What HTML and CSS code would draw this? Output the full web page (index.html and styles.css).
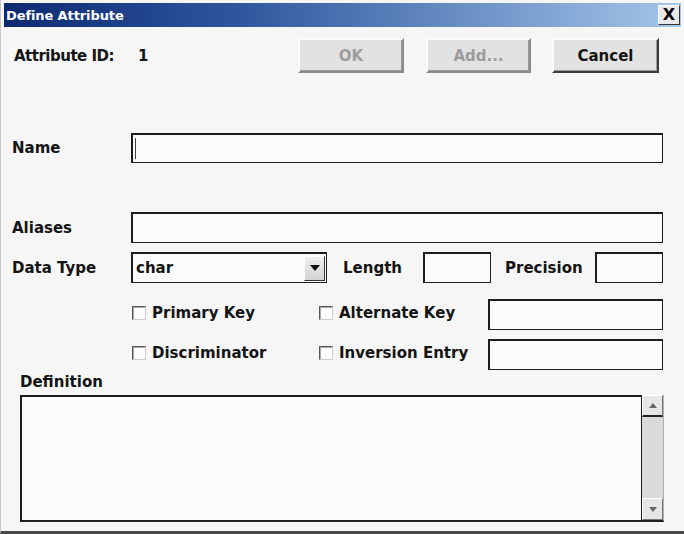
FILE: index.html
```html
<!DOCTYPE html>
<html>
<head>
<meta charset="utf-8">
<title>Define Attribute</title>
<link rel="stylesheet" href="styles.css">
</head>
<body>
<div class="dialog">
  <div class="titlebar">
    <span class="title">Define Attribute</span>
    <span class="close">X</span>
  </div>

  <div class="row-top">
    <span class="lbl id-lbl">Attribute ID:</span>
    <span class="lbl id-val">1</span>
    <button class="btn btn-ok" disabled>OK</button>
    <button class="btn btn-add" disabled>Add...</button>
    <button class="btn btn-cancel">Cancel</button>
  </div>

  <div class="row row-name">
    <span class="lbl col-lbl">Name</span>
    <div class="field field-wide"><span class="caret"></span></div>
  </div>

  <div class="row row-alias">
    <span class="lbl col-lbl">Aliases</span>
    <div class="field field-wide"></div>
  </div>

  <div class="row row-type">
    <span class="lbl col-lbl">Data Type</span>
    <div class="field select">
      <span class="select-val">char</span>
      <span class="drop"><svg width="10" height="6" viewBox="0 0 10 6"><path d="M0 0H10L5 6Z" fill="#111"/></svg></span>
    </div>
    <span class="lbl len-lbl">Length</span>
    <div class="field small"></div>
    <span class="lbl prec-lbl">Precision</span>
    <div class="field small"></div>
  </div>

  <div class="row row-check1">
    <span class="chk-group g1"><span class="chk"></span><span class="lbl">Primary Key</span></span>
    <span class="chk-group g2"><span class="chk"></span><span class="lbl">Alternate Key</span></span>
    <div class="field medium"></div>
  </div>

  <div class="row row-check2">
    <span class="chk-group g1"><span class="chk"></span><span class="lbl">Discriminator</span></span>
    <span class="chk-group g2"><span class="chk"></span><span class="lbl">Inversion Entry</span></span>
    <div class="field medium"></div>
  </div>

  <div class="def-lbl lbl">Definition</div>
  <div class="def-box">
    <div class="def-text"></div>
    <div class="scroll">
      <span class="sb-btn sb-up"><svg width="8" height="5" viewBox="0 0 8 5"><path d="M0 5H8L4 0Z" fill="#666"/></svg></span>
      <span class="sb-track"></span>
      <span class="sb-btn sb-down"><svg width="8" height="5" viewBox="0 0 8 5"><path d="M0 0H8L4 5Z" fill="#666"/></svg></span>
    </div>
  </div>
</div>
</body>
</html>
```

FILE: styles.css
```css
html, body {
  margin: 0;
  padding: 0;
  background: #f6f6f6;
}
.dialog {
  width: 684px;
  height: 534px;
  box-sizing: border-box;
  padding: 3px 3px 0 3px;
  border-left: 1px solid #c9c9c9;
  border-bottom: 3px solid #4a4a4a;
  background: #f6f6f6;
  font-family: "DejaVu Sans", Verdana, sans-serif;
  font-weight: bold;
  color: #141414;
}
.titlebar {
  height: 24px;
  background: linear-gradient(to right, #0c2a72 0%, #2f579e 35%, #a4c6ea 100%);
  display: flex;
  align-items: center;
  justify-content: space-between;
  padding: 0 1px 0 2px;
}
.title {
  color: #fff;
  font-size: 13px;
  letter-spacing: -0.1px;
}
.close {
  width: 22px;
  height: 20px;
  box-sizing: border-box;
  background: #e8e8e8;
  border: 1px solid;
  border-color: #fff #333 #333 #fff;
  font-size: 16px;
  color: #000;
  display: flex;
  align-items: center;
  justify-content: center;
  line-height: 1;
}
.lbl {
  font-size: 15px;
  white-space: nowrap;
}
.row-top {
  display: flex;
  align-items: center;
  margin-top: 11px;
  height: 35px;
  padding-left: 10px;
}
.id-lbl { width: 124px; letter-spacing: -0.5px; }
.id-val { width: 160px; }
.btn {
  height: 35px;
  box-sizing: border-box;
  background: #e2e2e2;
  border: 2px solid;
  border-color: #fbfbfb #3c3c3c #3c3c3c #fbfbfb;
  box-shadow: inset -1px -1px 0 #9a9a9a;
  font-family: "DejaVu Sans", Verdana, sans-serif;
  font-weight: bold;
  font-size: 15px;
  color: #141414;
  padding: 0;
}
.btn:disabled { color: #9c9c9c; border-color: #fbfbfb #8a8a8a #8a8a8a #fbfbfb; }
.btn-ok { width: 106px; }
.btn-add { width: 105px; margin-left: 22px; }
.btn-cancel { width: 107px; margin-left: 21px; }

.row {
  display: flex;
  align-items: center;
  padding-left: 8px;
}
.col-lbl { width: 119px; }
.field {
  box-sizing: border-box;
  background: #fbfbfb;
  border: 1px solid #1e1e1e;
  border-top-width: 2px;
  border-left-width: 2px;
  height: 31px;
  position: relative;
}
.field-wide { width: 532px; }
.row-name { margin-top: 60px; }
.row-name .field { height: 30px; }
.caret {
  position: absolute;
  left: 2px;
  top: 3px;
  width: 1px;
  height: 21px;
  background: #444;
}
.row-alias { margin-top: 49px; }
.row-type { margin-top: 9px; }
.select {
  width: 196px;
  display: flex;
  align-items: center;
  justify-content: space-between;
  padding-left: 3px;
}
.select-val { font-size: 15px; }
.drop {
  width: 21px;
  height: 25px;
  box-sizing: border-box;
  background: linear-gradient(#f0f0f0, #d2d2d2);
  border: 1px solid;
  border-color: #fff #333 #333 #fff;
  display: flex;
  align-items: center;
  justify-content: center;
  margin-right: 1px;
}
.len-lbl { margin-left: 16px; width: 80px; }
.prec-lbl { margin-left: 14px; width: 90px; }
.small { width: 68px; }
.medium { width: 175px; }
.row-check1 { margin-top: 16px; padding-left: 128px; }
.row-check2 { margin-top: 9px; padding-left: 128px; }
.chk-group {
  display: flex;
  align-items: center;
  gap: 6px;
  margin-bottom: 4px;
}
.g1 { width: 187px; }
.g2 { width: 169px; }
.chk {
  width: 14px;
  height: 14px;
  box-sizing: border-box;
  border: 1px solid;
  border-color: #555 #ccc #ccc #555;
  background: #fdfdfd;
  box-shadow: inset 1px 1px 0 #aaa;
}
.def-lbl {
  margin-top: 3px;
  padding-left: 16px;
  height: 19px;
  line-height: 19px;
}
.def-box {
  margin: 3px 0 0 16px;
  width: 644px;
  height: 127px;
  display: flex;
  box-sizing: border-box;
}
.def-text {
  flex: 1;
  background: #fbfbfb;
  border: 2px solid #1e1e1e;
  border-right-width: 1px;
  border-bottom-width: 2px;
}
.scroll {
  width: 22px;
  display: flex;
  flex-direction: column;
  background: #dcdcdc;
  border-right: 1px solid #b0b0b0;
  border-bottom: 2px solid #1e1e1e;
  box-sizing: border-box;
}
.sb-btn {
  display: flex;
  align-items: center;
  justify-content: center;
  background: #e6e6e6;
  border: 1px solid;
  border-color: #fff #777 #777 #fff;
}
.sb-up { height: 19px; border-bottom: 2px solid #222; }
.sb-track { flex: 1; background: #dadada; }
.sb-down { height: 20px; }
```
